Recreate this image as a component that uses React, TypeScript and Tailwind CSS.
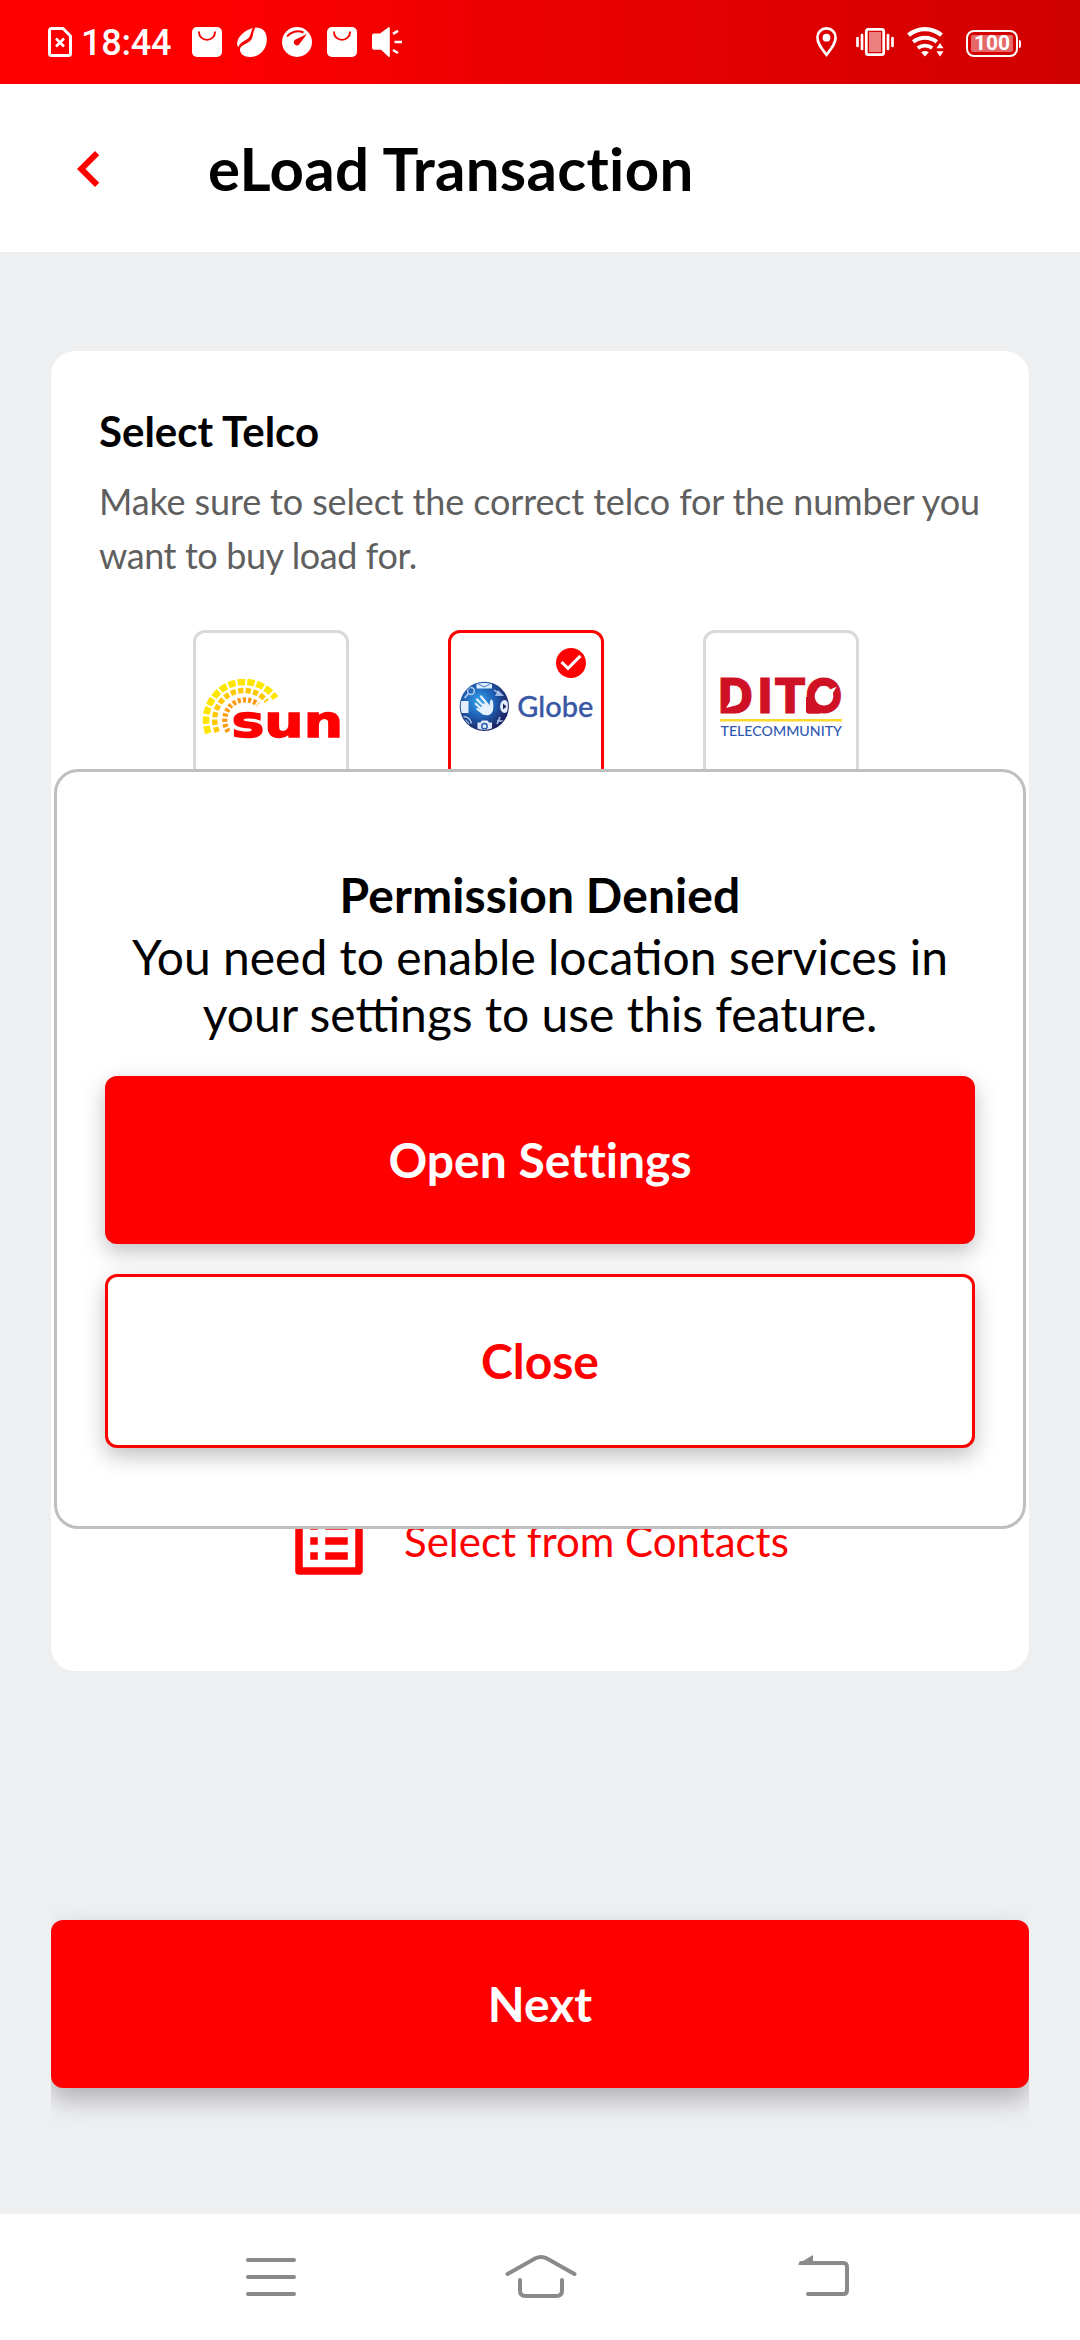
import React from "react";
import { MdCheckCircle, MdChevronLeft, MdListAlt } from "react-icons/md";

function BagIcon() {
  return (
    <svg className="h-[30px] w-[30px]" viewBox="0 0 30 30" fill="none">
      <rect width="30" height="30" rx="5" fill="white" />
      <path d="M7 4.5v.8a8 7.6 0 0 0 16 0v-.8" stroke="#f80000" strokeWidth="1.9" />
    </svg>
  );
}

function StatusBar() {
  return (
    <div className="flex h-[84px] shrink-0 items-center justify-between bg-linear-to-r from-[#ff0000] from-15% to-[#d00000] pr-[59px] pl-12">
      <div className="flex items-center">
        <svg className="h-[30px] w-6" viewBox="0 0 24 30" fill="none" stroke="white">
          <path d="M3.5 1.5H15L22.5 9v17.5a2 2 0 0 1-2 2h-17a2 2 0 0 1-2-2v-23a2 2 0 0 1 2-2z" strokeWidth="3" strokeLinejoin="round" />
          <path d="M8 11.5l8 8M16 11.5l-8 8" strokeWidth="2.6" />
        </svg>
        <span className="ml-[9px] w-[111px] pt-[2px] font-[Roboto] text-[36px] leading-[42px] font-medium tracking-[-0.2px] text-white">18:44</span>
        <div className="flex gap-[15px]">
          <BagIcon />
          <svg className="h-[30px] w-[30px]" viewBox="0 0 30 30" fill="white">
            <path d="M16 .9C8 3 1.200 9 .2 15.500c-.4 2.300.3 3.700 1.200 4.500C3 15 8.500 14 11.500 11 14 8.500 13.500 4.500 16 .9z" />
            <path d="M18.500.4C27 .5 30 6 29.800 13 29.600 23 22 30 13 30 7 30 3 27 3 22.500 3.200 18 9 17.500 13 14 17 10.500 15.500 4 18.500.4z" />
          </svg>
          <svg className="h-[30px] w-[30px]" viewBox="0 0 30 30" fill="none">
            <circle cx="15" cy="15" r="15" fill="white" />
            <path d="M5 9.500C8.500 4.800 15.500 2.800 21.500 5.500" stroke="#f50000" strokeWidth="2" />
            <path d="M25 7L18 16.300A3.200 3.200 0 1 1 13 12.700z" fill="#f50000" />
          </svg>
          <BagIcon />
          <svg className="h-[30px] w-[30px]" viewBox="0 0 30 30" fill="none">
            <path d="M2 6.500h6L16.500.2c.8-.5 1.300-.1 1.300.8v28c0 .9-.5 1.300-1.300.8L9 22.700H2a2 2 0 0 1-2-2V8.500a2 2 0 0 1 2-2z" fill="white" />
            <path d="M21 6.800l5-3M22.500 15H30M21 23l5 3" stroke="white" strokeWidth="2.600" />
          </svg>
        </div>
      </div>
      <div className="flex items-center">
        <svg className="h-[30px] w-[21px]" viewBox="0 0 21 30" fill="none">
          <path d="M10.500 1.400a9 9 0 0 0-9.100 9c0 6.300 4.600 11.600 9.100 17.400 4.500-5.800 9.100-11.100 9.100-17.400a9 9 0 0 0-9.100-9z" stroke="white" strokeWidth="2.600" />
          <circle cx="10.500" cy="10.700" r="3.900" fill="white" />
        </svg>
        <svg className="ml-[19px] h-[28px] w-[38px]" viewBox="0 0 38 28" fill="none">
          <rect x="10.300" y="1.300" width="17.400" height="25.400" rx="2" stroke="white" strokeWidth="2.800" />
          <rect x="13" y="4" width="12" height="20" fill="#ec8080" />
          <path d="M6 7v14M1.500 10v8M32 7v14M36.500 10v8" stroke="white" strokeWidth="2.700" strokeLinecap="round" />
        </svg>
        <svg className="ml-[13px] h-[30px] w-[37px]" viewBox="0 0 37 30" fill="none">
          <path d="M1.500 8.200a25.500 25.500 0 0 1 33 0" stroke="white" strokeWidth="4.200" />
          <path d="M6.200 14.900a19 19 0 0 1 23.600 0" stroke="white" strokeWidth="4" />
          <path d="M10.800 21a12 12 0 0 1 14.400 0" stroke="white" strokeWidth="3.800" />
          <path d="M14.200 25.300a6.500 6.500 0 0 1 7.600 0L18 29.500z" fill="white" />
          <path d="M28 21.600L33 14l6 7.600v2L33 31l-5-7.400z" fill="#d90000" />
          <path d="M29.500 21.200h7L33 16zM29.500 24.200h7L33 29.500z" fill="white" />
        </svg>
        <div className="ml-[22px] flex items-center gap-px pt-[3px]">
          <div className="h-[27px] w-[52px] rounded-[8px] border-2 border-white p-[3px]">
            <div className="flex h-full items-center justify-center rounded-[2px] bg-[#e66868] font-[Roboto] text-[21px] leading-none font-bold text-white">100</div>
          </div>
          <div className="h-2 w-[2px] rounded-r bg-white" />
        </div>
      </div>
    </div>
  );
}

function SunLogo() {
  return (
    <svg className="h-[80px] w-[148px]" viewBox="197 672 148 80" fill="none">
      <path d="M208.300 733.100A38.300 38.300 0 0 1 275.700 698.200" stroke="#ffe600" strokeWidth="6.600" strokeDasharray="7.400 2.100" />
      <path d="M217.400 732A29.300 29.300 0 0 1 266.700 701.200" stroke="#ffc800" strokeWidth="5.400" strokeDasharray="5.300 2.200" />
      <path d="M228.300 731.600A20.300 20.300 0 0 1 258 704.500" stroke="#ff9a10" strokeWidth="5.200" strokeDasharray="3.200 2" />
      <text x="231.500" y="736.500" textLength="111.500" lengthAdjust="spacingAndGlyphs" fontFamily="DejaVu Sans" fontWeight="700" fontSize="44" fill="#ff0000" stroke="#ff0000" strokeWidth="1.400">sun</text>
    </svg>
  );
}

function GlobeLogo() {
  return (
    <svg className="h-[52px] w-[142px]" viewBox="455 680 142 52" fill="none">
      <defs>
        <radialGradient id="sphere" cx="0.4" cy="0.4" r="0.6">
          <stop offset="0" stopColor="#35a5ee" />
          <stop offset="0.5" stopColor="#1e63b8" />
          <stop offset="1" stopColor="#1d2463" />
        </radialGradient>
        <clipPath id="disc"><circle cx="484.300" cy="706.300" r="23.600" /></clipPath>
      </defs>
      <circle cx="484.300" cy="706.300" r="24.600" fill="url(#sphere)" />
      <g clipPath="url(#disc)">
        <path d="M476.500 682.500h15.500v6h-15.500z" fill="#dcecff" />
        <path d="M476.500 683l7.700 4 7.800-4" stroke="#4779c0" />
        <path d="M460 701h8.500v12H460z" fill="#e3edfb" />
        <circle cx="471" cy="691" r="3.400" stroke="#b5cdee" strokeWidth="1.500" />
        <path d="M468.500 693.500l-4 4.500" stroke="#b5cdee" strokeWidth="1.600" />
        <path d="M495 696l3-6 6 6z" fill="#9db8e4" />
        <path d="M494 690l6 4" stroke="#b5cdee" strokeWidth="1.300" />
        <ellipse cx="504.500" cy="706.500" rx="4.400" ry="6.500" fill="#e3edfb" />
        <path d="M503 703.500v6l3.500-3z" fill="#1d2463" />
        <path d="M464 720a7 7 0 0 1 5 5M463.500 716.500a9 9 0 0 1 8 7" stroke="#b0c8ea" strokeWidth="1.500" />
        <path d="M477.500 722.500h3l1.500-2h5.500l1.500 2h3V730h-14.500z" fill="#dfeafd" />
        <circle cx="484.500" cy="726.200" r="2.700" fill="#dfeafd" stroke="#2458a8" strokeWidth="1.400" />
        <path d="M497 724l3-7M497 721h7" stroke="#b0c8ea" strokeWidth="1.500" />
        <path d="M477 699.500l8 8M475.800 704l7.500 6.500M477.500 709l6 4.500M481 696.500l7 8.500" stroke="#e5f1fd" strokeWidth="2.300" strokeLinecap="round" />
        <path d="M484 703l5 3c1.200-1.500.5-6 2.500-6.500 2 .2 2.200 7 1.500 10.500-.8 3.500-3.800 5.600-6.500 5.300-3.500-.3-5.500-3.300-7-5.300z" fill="#e5f1fd" />
      </g>
      <text x="517.300" y="716.600" textLength="76" lengthAdjust="spacingAndGlyphs" fontFamily="Lato" fontWeight="500" fontSize="28.500" fill="#3857a5" stroke="#3857a5" strokeWidth="0.300">Globe</text>
    </svg>
  );
}

function DitoLogo() {
  return (
    <svg className="h-[84px] w-[134px]" viewBox="714 665 134 84" fill="none">
      <g fontFamily="Inter" fontWeight="800" fontSize="47.500" fill="#cf1126" stroke="#cf1126" strokeWidth="1.200">
        <text y="713.200" x="718.500 758.300 773.900 805.400">DITO</text>
      </g>
      <path d="M806 697h6l8 16.800h-11a3 3 0 0 1-3-3z" fill="#cf1126" />
      <circle cx="824" cy="696.300" r="9.300" fill="white" />
      <path d="M829 690l7.500-3.200-4 7z" fill="white" />
      <path d="M726 708l5-8 6 5z" fill="white" />
      <path d="M720 720.300h122" stroke="#fbd92e" strokeWidth="2.400" />
      <text x="720.500" y="736.200" textLength="121.500" lengthAdjust="spacingAndGlyphs" fontFamily="Lato" fontWeight="500" fontSize="14" fill="#2f5ab4">TELECOMMUNITY</text>
    </svg>
  );
}

function TelcoTile({ selected = false, children }: { selected?: boolean; children: React.ReactNode }) {
  return (
    <div
      className={`relative flex h-[156px] w-[156px] justify-center rounded-[12px] border-3 ${
        selected ? "border-[#ff0000]" : "border-[#d9d9d9]"
      }`}
    >
      {selected && <MdCheckCircle className="absolute top-[12px] right-[12px] size-[36px] text-[#ff0000]" />}
      {children}
    </div>
  );
}

function PermissionDialog() {
  return (
    <div className="absolute top-[769px] left-[54px] flex h-[760px] w-[972px] flex-col rounded-[24px] border-3 border-[#bfbfbf] bg-white px-12 pt-[94px] text-center text-[48px] leading-[57px]">
      <h2 className="font-bold tracking-[0.1px]">Permission Denied</h2>
      <p className="mt-[5px] whitespace-nowrap">
        You need to enable location services in
        <br />
        your settings to use this feature.
      </p>
      <button className="mt-[34px] h-[168px] shrink-0 rounded-[12px] bg-[#ff0000] pb-[2px] font-bold text-white shadow-[0_8px_22px_rgba(0,0,0,0.25)] [font-variant-ligatures:none]">
        Open Settings
      </button>
      <button className="mt-[30px] h-[174px] shrink-0 rounded-[12px] border-3 border-[#ff0000] bg-white pb-[2px] font-bold text-[#ff0000] shadow-[0_8px_22px_rgba(0,0,0,0.25)]">
        Close
      </button>
    </div>
  );
}

function NavigationBar() {
  return (
    <div className="flex h-[126px] shrink-0 items-center bg-white pl-[245px]">
      <svg className="h-[44px] w-[52px]" viewBox="245 2255 52 44" stroke="#8a8a8a" strokeWidth="4" strokeLinecap="round">
        <path d="M248 2260h46M248 2277h46M248 2294h46" />
      </svg>
      <svg className="ml-[208px] h-[44px] w-[72px]" viewBox="505 2255 72 44" fill="none" stroke="#8a8a8a" strokeWidth="4" strokeLinecap="round">
        <path d="M507.500 2274l28-15.700q5.500-2.600 11 0l28 15.700" />
        <path d="M520 2280v10.500q0 5.500 5.500 5.500h31q5.500 0 5.500-5.500V2280" />
      </svg>
      <svg className="ml-[220px] h-[44px] w-[54px]" viewBox="797 2255 54 44" fill="none" stroke="#8a8a8a" strokeWidth="4" strokeLinecap="round">
        <path d="M801 2263h42.500q3.500 0 3.500 4v23q0 4-3.500 4H808" />
        <path d="M798 2264l15-9v10h-14z" fill="#8a8a8a" stroke="none" />
      </svg>
    </div>
  );
}

export default function App() {
  return (
    <div className="relative flex h-[2340px] w-[1080px] flex-col overflow-hidden bg-[#eeeff1] font-[Lato,sans-serif] text-black">
      <StatusBar />
      <header className="flex h-[168px] shrink-0 items-center bg-white pl-[53px]">
        <MdChevronLeft className="mt-[2px] size-[72px] text-[#ff0000]" />
        <h1 className="ml-[83px] text-[60px] leading-[72px] font-bold tracking-[0.3px] [font-variant-ligatures:none]">eLoad Transaction</h1>
      </header>

      <main className="flex flex-1 flex-col px-[51px] pt-[99px]">
        <section className="flex h-[1320px] flex-col rounded-[24px] bg-white px-12 pt-12 pb-[85px]">
          <h2 className="text-[42px] leading-[64px] font-bold">Select Telco</h2>
          <p className="mt-[11px] text-[36px] leading-[54px] whitespace-nowrap text-[#5f5f5f]">
            <span className="tracking-[-0.14px]">Make sure to select the correct telco for the number you</span>
            <br />
            <span className="tracking-[-0.4px]">want to buy load for.</span>
          </p>
          <div className="mt-12 flex gap-[99px] pl-[94px]">
            <TelcoTile>
              <div className="pt-[39px]"><SunLogo /></div>
            </TelcoTile>
            <TelcoTile selected>
              <div className="pt-[47px]"><GlobeLogo /></div>
            </TelcoTile>
            <TelcoTile>
              <div className="pt-[32px]"><DitoLogo /></div>
            </TelcoTile>
          </div>
          <div className="mt-auto flex items-center gap-[30px] pl-[185px] text-[42px] leading-[63px] text-[#ff0000]">
            <MdListAlt className="size-[90px]" />
            <span>Select from Contacts</span>
          </div>
        </section>

        <div className="h-[500px] overflow-hidden pt-[249px]">
          <button className="h-[168px] w-full rounded-[12px] bg-[#ff0000] text-[48px] font-bold text-white shadow-[0_12px_24px_rgba(0,0,0,0.26)]">Next</button>
        </div>
      </main>

      <NavigationBar />
      <PermissionDialog />
    </div>
  );
}
